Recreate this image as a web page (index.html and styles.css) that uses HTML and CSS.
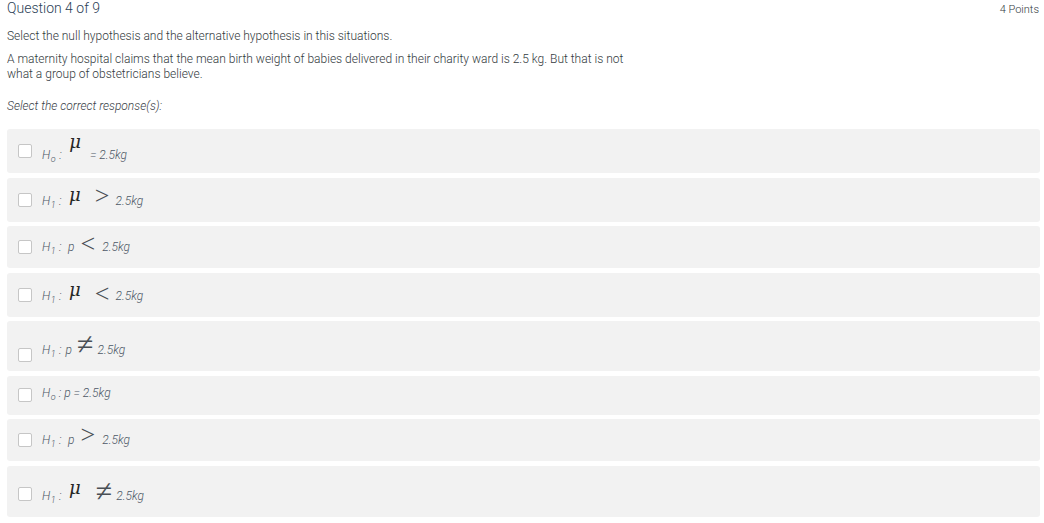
FILE: index.html
```html
<!DOCTYPE html>
<html lang="en">
<head>
<meta charset="utf-8">
<title>Question 4 of 9</title>
<link rel="stylesheet" href="styles.css">
</head>
<body>
<main class="quiz">
  <header class="q-head">
    <h1 class="q-title">Question 4 of 9</h1>
    <span class="q-points">4 Points</span>
  </header>
  <p class="q-text">Select the null hypothesis and the alternative hypothesis in this situations.</p>
  <p class="q-text q-scenario">A maternity hospital claims that the mean birth weight of babies delivered in their charity ward is 2.5 kg. But that is not what a group of obstetricians believe.</p>
  <p class="q-hint">Select the correct response(s):</p>

  <ul class="options">
    <li class="opt opt--mu-eq">
      <span class="check"></span>
      <span class="expr">H<sub>o</sub><span class="colon">:</span><span class="mu mu--high">μ</span><span class="val val--eq">= 2.5kg</span></span>
    </li>
    <li class="opt opt--mu-rel">
      <span class="check"></span>
      <span class="expr">H<sub>1</sub><span class="colon">:</span><span class="mu">μ</span><span class="rel">&gt;</span><span class="val">2.5kg</span></span>
    </li>
    <li class="opt opt--p-rel">
      <span class="check"></span>
      <span class="expr">H<sub>1</sub><span class="colon">:</span><span class="var">p</span><span class="rel rel--p rel--lt">&lt;</span><span class="val">2.5kg</span></span>
    </li>
    <li class="opt opt--mu-rel">
      <span class="check"></span>
      <span class="expr">H<sub>1</sub><span class="colon">:</span><span class="mu mu--low">μ</span><span class="rel rel--low">&lt;</span><span class="val">2.5kg</span></span>
    </li>
    <li class="opt opt--p-neq">
      <span class="check"></span>
      <span class="expr">H<sub>1</sub><span class="colon">:</span><span class="var var--tight">p</span><span class="neq neq--p">≠</span><span class="val">2.5kg</span></span>
    </li>
    <li class="opt opt--plain">
      <span class="check"></span>
      <span class="expr">H<sub>o</sub><span class="colon colon--plain">:</span>p = 2.5kg</span>
    </li>
    <li class="opt opt--p-rel">
      <span class="check"></span>
      <span class="expr">H<sub>1</sub><span class="colon">:</span><span class="var">p</span><span class="rel rel--p">&gt;</span><span class="val">2.5kg</span></span>
    </li>
    <li class="opt opt--mu-neq">
      <span class="check"></span>
      <span class="expr">H<sub>1</sub><span class="colon">:</span><span class="mu mu--mid">μ</span><span class="neq">≠</span><span class="val">2.5kg</span></span>
    </li>
  </ul>
</main>
</body>
</html>
```

FILE: styles.css
```css
html, body {
  margin: 0;
  padding: 0;
  background: #ffffff;
}

body {
  font-family: Roboto, "Liberation Sans", Arial, sans-serif;
  font-weight: 300;
  color: #333a40;
}

.quiz {
  padding: 0 4px 0 7px;
}

.q-head {
  display: flex;
  justify-content: space-between;
  align-items: baseline;
  height: 16px;
}

.q-title {
  margin: 0;
  font-size: 14px;
  line-height: 16px;
  font-weight: 300;
  color: #2c4257;
}

.q-points {
  font-size: 11px;
  line-height: 16px;
  color: #333a40;
  margin-right: 1px;
}

.q-text {
  margin: 12.5px 0 0;
  font-size: 12px;
  line-height: 14.5px;
  max-width: 628px;
}

.q-scenario {
  margin-top: 9px;
}

.q-hint {
  margin: 17.5px 0 0;
  font-size: 12px;
  line-height: 14.5px;
  font-style: italic;
  color: #3b4248;
}

.options {
  list-style: none;
  margin: 16px 0 0;
  padding: 0;
  display: flex;
  flex-direction: column;
  gap: 4.5px;
}

.opt {
  display: flex;
  align-items: flex-start;
  padding: 0 11px;
  background: #f2f2f2;
  border-radius: 3px;
}

.check {
  flex: none;
  align-self: center;
  box-sizing: border-box;
  width: 14px;
  height: 14px;
  margin-right: 10px;
  border: 1px solid #c6c6c6;
  border-radius: 2px;
  background: #ffffff;
}

.expr {
  font-family: Roboto, "Liberation Sans", Arial, sans-serif;
  font-style: italic;
  font-weight: 300;
  font-size: 12px;
  line-height: 14px;
  color: #4d5866;
  white-space: nowrap;
}

.expr sub {
  font-size: 9px;
  line-height: 0;
  vertical-align: -3px;
  margin-left: 0.5px;
}

.colon {
  margin: 0 3px 0 3.5px;
}

.colon--plain {
  margin: 0 3px 0 3px;
}

.var {
  margin-left: 3.5px;
}

.var--tight {
  margin-left: 1px;
}

.mu {
  font-family: "DejaVu Serif", "Liberation Serif", serif;
  font-style: italic;
  font-weight: 400;
  font-size: 18px;
  line-height: 0;
  color: #262626;
  vertical-align: 4px;
  margin: 0 0 0 4.5px;
}

.mu--high {
  vertical-align: 11px;
}

.mu--low {
  vertical-align: 3.5px;
}

.mu--mid {
  vertical-align: 5.5px;
}

.rel {
  font-family: "Liberation Serif", "DejaVu Serif", serif;
  font-style: normal;
  font-weight: 400;
  font-size: 26px;
  line-height: 0;
  color: #4a4f55;
  vertical-align: 0.5px;
  margin: 0 6px 0 14px;
}

.rel--low {
  vertical-align: -2px;
}

.rel--p {
  vertical-align: 1.5px;
  margin: 0 7px 0 6px;
}

.rel--lt {
  vertical-align: -0.5px;
}

.neq {
  font-family: "Liberation Serif", "DejaVu Serif", serif;
  font-style: normal;
  font-weight: 400;
  font-size: 30px;
  line-height: 0;
  color: #4a4f55;
  vertical-align: -1px;
  margin: 0 4px 0 15px;
}

.neq--p {
  vertical-align: -0.5px;
  margin: 0 4px 0 5px;
}

.val--eq {
  margin-left: 9px;
}

.opt--mu-eq {
  height: 44px;
}
.opt--mu-eq .expr {
  padding-top: 12.5px;
}

.opt--mu-rel {
  height: 44px;
}
.opt--mu-rel .expr {
  padding-top: 16px;
}

.opt--p-rel {
  height: 42px;
}
.opt--p-rel .expr {
  padding-top: 14.4px;
}

.opt--p-neq {
  height: 50px;
}
.opt--p-neq .check {
  align-self: flex-start;
  margin-top: 27px;
}
.opt--p-neq .expr {
  padding-top: 21.5px;
}

.opt--plain {
  height: 39px;
}
.opt--plain .expr {
  padding-top: 10.2px;
}

.opt--mu-neq {
  height: 51px;
}
.opt--mu-neq .check {
  align-self: flex-start;
  margin-top: 21px;
}
.opt--mu-neq .expr {
  padding-top: 22.8px;
}
```
